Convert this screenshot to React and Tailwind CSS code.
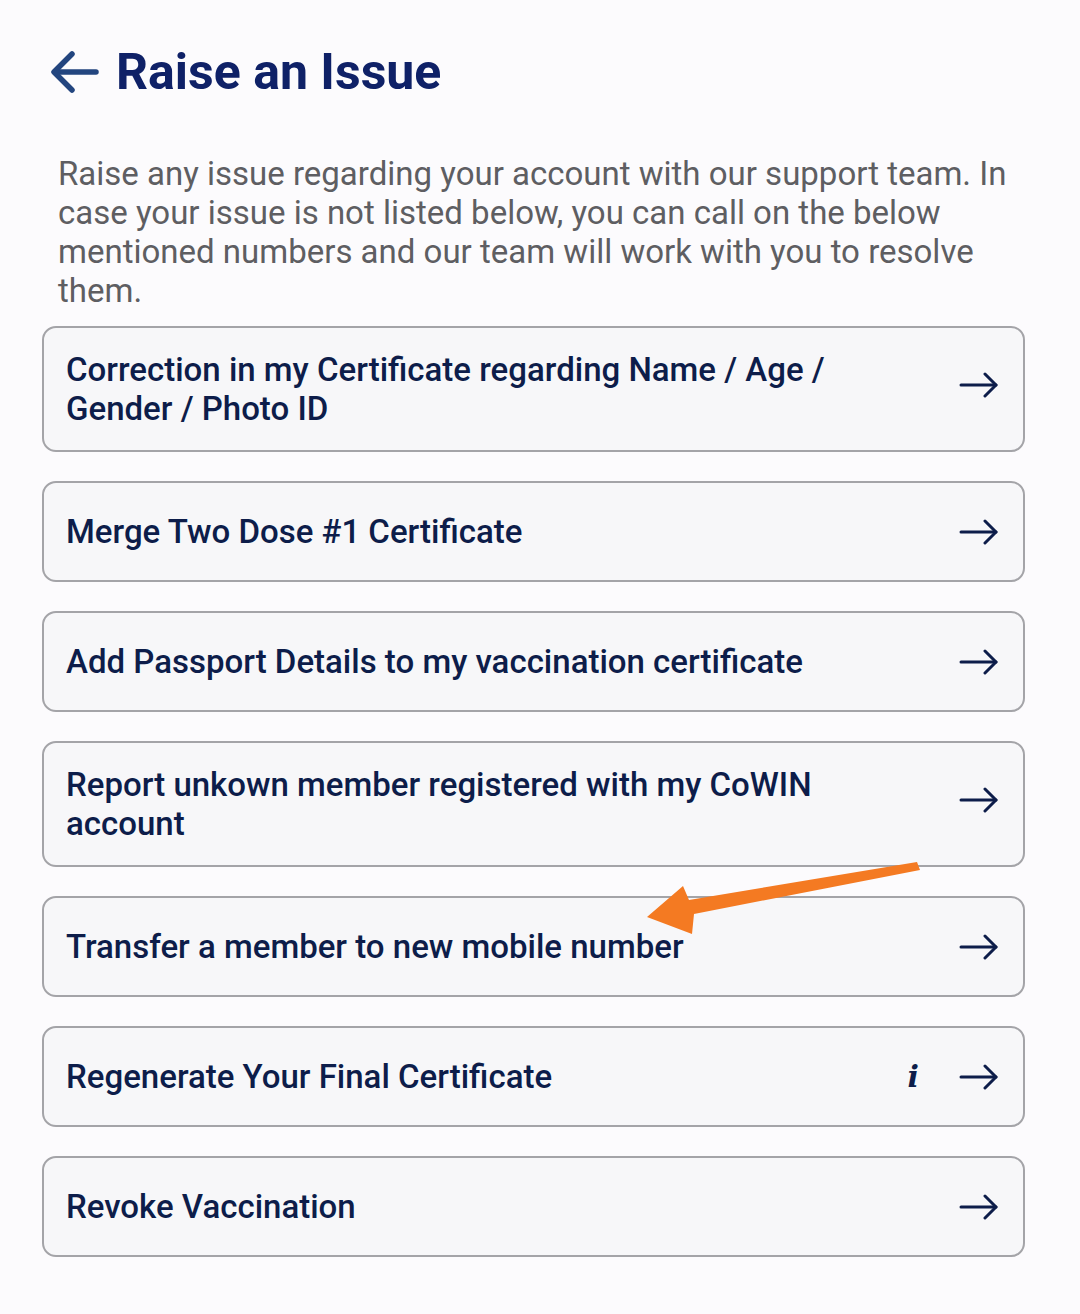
import React from 'react';

const items = [
    { label: 'Correction in my Certificate regarding Name / Age / Gender / Photo ID', tall: true },
    { label: 'Merge Two Dose #1 Certificate' },
    { label: 'Add Passport Details to my vaccination certificate' },
    { label: 'Report unkown member registered with my CoWIN account', tall: true },
    { label: 'Transfer a member to new mobile number' },
    { label: 'Regenerate Your Final Certificate', info: true },
    { label: 'Revoke Vaccination' },
];

const ArrowRight = () => (
    <svg width="40" height="26" viewBox="0 0 40 26" fill="none" stroke="#0d1d4a" strokeWidth="3" strokeLinecap="round" strokeLinejoin="round">
        <path d="M2 13h35" />
        <path d="M26 2l11 11-11 11" />
    </svg>
);

const IssueCard = ({ label, info, tall }) => (
    <button className="w-full flex items-center justify-between text-left bg-[#f7f7f9] border-2 border-[#a4a4a8] rounded-[14px] pl-[22px] pr-[24px] py-[22px] min-h-[101px]">
        <span className={`text-[33px] leading-[39px] font-medium text-[#0d1d4a] ${tall ? 'max-w-[800px]' : ''}`}>
            {label}
        </span>
        <span className={`flex items-center gap-[40px] shrink-0 ${tall ? '-mt-[8px]' : ''}`}>
            {info && (
                <span className="text-[30px] font-bold italic text-[#0d1d4a] leading-none" style={{ fontFamily: '"DejaVu Serif", serif' }}>i</span>
            )}
            <ArrowRight />
        </span>
    </button>
);

export default function App() {
    return (
        <div className="relative min-h-[1314px] w-[1080px] bg-[#fcfbfd] px-[42px] pt-[40px]" style={{ fontFamily: 'Roboto, "Noto Sans", sans-serif' }}>
            <div className="flex items-center gap-[16px] pl-[8px]">
                <svg width="50" height="44" viewBox="0 0 50 44" fill="none" stroke="#23457f" strokeWidth="5.5" strokeLinecap="round" strokeLinejoin="round">
                    <path d="M46 22H5" />
                    <path d="M22 4L4 22l18 18" />
                </svg>
                <h1 className="text-[50px] font-bold text-[#0f2167] leading-[64px]">Raise an Issue</h1>
            </div>

            <p className="mt-[50px] pl-[16px] pr-[20px] text-[33px] leading-[39px] text-[#5e5e62]">
                Raise any issue regarding your account with our support team. In case your issue is not listed below, you can call on the below mentioned numbers and our team will work with you to resolve them.
            </p>

            <div className="mt-[16px] flex flex-col gap-[29px] w-[983px]">
                {items.map((it) => (
                    <IssueCard key={it.label} {...it} />
                ))}
            </div>

            <svg className="absolute left-0 top-0 pointer-events-none" width="1080" height="1314" viewBox="0 0 1080 1314">
                <polygon
                    points="647,917 683,886 689,900 917,862 920,870 694,914 692,934"
                    fill="#f47a22"
                />
            </svg>
        </div>
    );
}
